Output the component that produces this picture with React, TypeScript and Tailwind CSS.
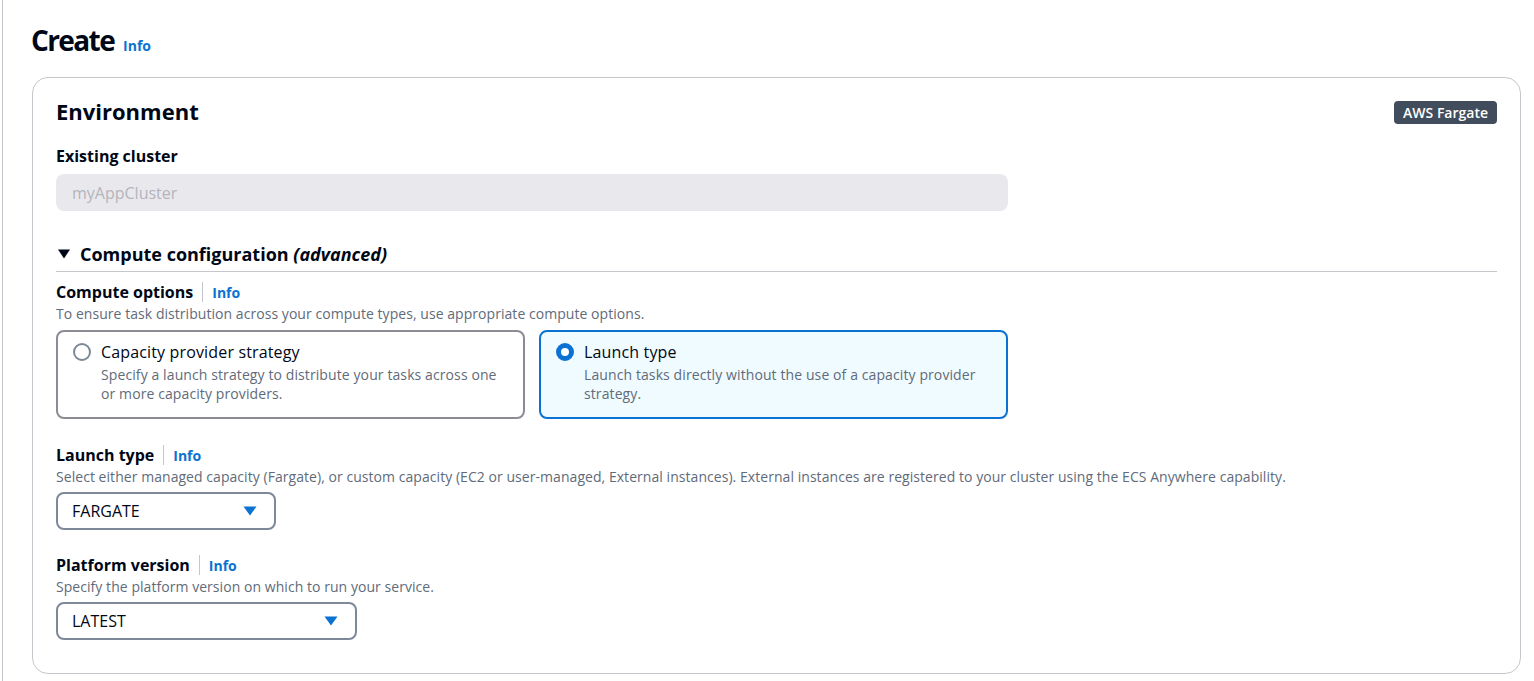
import React from 'react';

const font = { fontFamily: '"Open Sans", "Noto Sans", Arial, sans-serif' };

function InfoLink({ className = '' }: { className?: string }) {
  return <a className={`text-[14px] font-bold text-[#0972d3] ${className}`}>Info</a>;
}

function FieldLabel({ label }: { label: string }) {
  return (
    <div className="flex items-center h-[22px]">
      <span className="text-[16px] font-bold text-[#000716] leading-[22px]">{label}</span>
      <span className="mx-[9px] h-[20px] w-px bg-[#c6c6cd]" />
      <InfoLink />
    </div>
  );
}

function Caret() {
  return (
    <svg width="14" height="10" viewBox="0 0 14 10" className="shrink-0">
      <path d="M0.5 0.5 L13.5 0.5 L7 9.5 Z" fill="#0972d3" />
    </svg>
  );
}

function Select({ value, width }: { value: string; width: string }) {
  return (
    <div
      className={`${width} mt-[6px] h-[38px] flex items-center justify-between rounded-[8px] border-2 border-[#7d8998] pl-[14px] pr-[17px] text-[16px] text-[#000716]`}
    >
      <span>{value}</span>
      <Caret />
    </div>
  );
}

function RadioCard({
  title,
  desc,
  selected,
}: {
  title: string;
  desc: string;
  selected?: boolean;
}) {
  return (
    <div
      className={`h-[89px] rounded-[8px] border-2 pl-[15px] pr-[20px] pt-[9px] flex gap-[10px] ${
        selected ? 'border-[#0972d3] bg-[#f0fbff]' : 'border-[#8c8c94] bg-white'
      }`}
    >
      {selected ? (
        <span className="mt-[2px] h-[18px] w-[18px] shrink-0 rounded-full border-[5px] border-[#0972d3] bg-white" />
      ) : (
        <span className="mt-[2px] h-[18px] w-[18px] shrink-0 rounded-full border-2 border-[#7d8998] bg-white" />
      )}
      <div>
        <div className="text-[16px] leading-[22px] tracking-[0.15px] text-[#000716]">{title}</div>
        <div className="mt-[2px] text-[14px] leading-[19px] tracking-[0.1px] text-[#5f6b7a]">{desc}</div>
      </div>
    </div>
  );
}

function Desc({ children }: { children: React.ReactNode }) {
  return (
    <div className="mt-[2px] text-[14px] leading-[18px] tracking-[0.05px] text-[#5f6b7a]">{children}</div>
  );
}

export default function App() {
  return (
    <div style={font} className="min-h-[681px] bg-white">
      <div className="ml-[2px] min-h-[681px] border-l border-[#c6c6cd] pl-[29px] pr-[13px]">
        <div className="pt-[22px] flex items-baseline gap-[9px]">
          <h1 className="-ml-[1px] text-[28px] leading-[36px] font-bold text-[#000716] tracking-[-1.6px]">Create</h1>
          <InfoLink />
        </div>

        <div className="mt-[19px] rounded-[16px] border border-[#c6c6cd] pl-[23px] pr-[23px] pt-[19px] pb-[33px]">
          <div className="flex items-center justify-between h-[28px]">
            <h2 className="text-[22px] leading-[28px] font-bold text-[#000716]">Environment</h2>
            <span className="mt-[2px] h-[23px] flex items-center rounded-[4px] bg-[#414d5c] px-[9px] text-[14px] font-semibold text-white">
              AWS Fargate
            </span>
          </div>

          <div className="mt-[20px] text-[16px] font-bold leading-[22px] text-[#000716]">Existing cluster</div>
          <div className="mt-[7px] h-[37px] w-[952px] rounded-[8px] bg-[#e9e9ed] pl-[16px] flex items-center text-[16px] text-[#b4b4bb]">
            myAppCluster
          </div>

          <div className="mt-[31px] pb-[5px] border-b border-[#c6c6cd] flex items-center gap-[10px]">
            <svg width="12" height="10" viewBox="0 0 12 10" className="ml-[2px]">
              <path d="M0 0.5 L12 0.5 L6 9.5 Z" fill="#000716" />
            </svg>
            <span className="text-[18px] leading-[24px] font-bold text-[#000716]">
              Compute configuration <i>(advanced)</i>
            </span>
          </div>

          <div className="mt-[9px]">
            <FieldLabel label="Compute options" />
          </div>
          <Desc>To ensure task distribution across your compute types, use appropriate compute options.</Desc>
          <div className="mt-[7px] grid w-[952px] grid-cols-2 gap-[14px]">
            <RadioCard
              title="Capacity provider strategy"
              desc="Specify a launch strategy to distribute your tasks across one or more capacity providers."
            />
            <RadioCard
              selected
              title="Launch type"
              desc="Launch tasks directly without the use of a capacity provider strategy."
            />
          </div>

          <div className="mt-[25px]">
            <FieldLabel label="Launch type" />
          </div>
          <Desc>
            Select either managed capacity (Fargate), or custom capacity (EC2 or user-managed, External instances). External instances are registered to your cluster using the ECS Anywhere capability.
          </Desc>
          <Select value="FARGATE" width="w-[220px]" />

          <div className="mt-[24px]">
            <FieldLabel label="Platform version" />
          </div>
          <Desc>Specify the platform version on which to run your service.</Desc>
          <Select value="LATEST" width="w-[301px]" />
        </div>
      </div>
    </div>
  );
}
